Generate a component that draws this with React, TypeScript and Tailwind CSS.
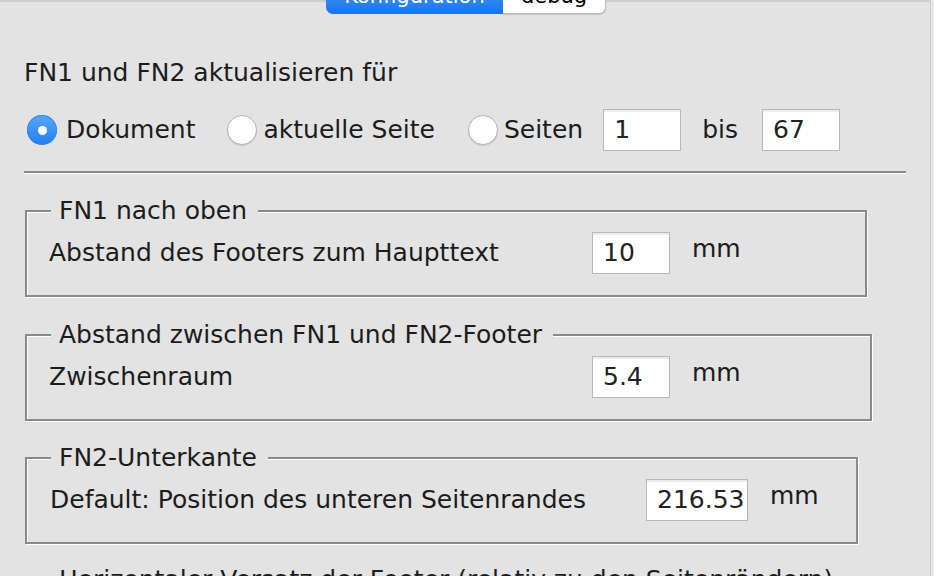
import { ReactNode } from "react"

const Radio = ({ checked }: { checked?: boolean }) =>
    checked ? (
        <span className="flex h-[30px] w-[30px] flex-none items-center justify-center rounded-full bg-gradient-to-b from-[#5aa6f8] to-[#1f7ef0] shadow-[inset_0_0_0_1px_#3a86e8]">
            <span className="h-[9px] w-[9px] rounded-full bg-white" />
        </span>
    ) : (
        <span className="block h-[30px] w-[30px] flex-none rounded-full border border-[#b3b3b3] bg-white shadow-[0_1px_1px_rgba(0,0,0,0.12)]" />
    )

const Field = ({ value, width }: { value: string; width: string }) => (
    <div
        className={`${width} flex h-[42px] flex-none items-center border border-[#b9b9b9] bg-white pl-[10px] text-[#222] shadow-[inset_0_2px_0_#ececec]`}>
        {value}
    </div>
)

const Group = ({ title, width, children }: { title: string; width: string; children: ReactNode }) => (
    <fieldset
        className={`${width} ml-[25px] border-2 border-[#8a8a8a] px-0 pb-[21px] pt-[6px] shadow-[inset_1px_1px_0_#ffffff,1px_1px_0_#ffffff]`}>
        <legend className="ml-[24px] bg-[#e3e3e3] pl-[8px] pr-[11px] leading-[30px]">{title}</legend>
        {children}
    </fieldset>
)

export default function App() {
    return (
        <div className="h-[576px] w-[934px] overflow-hidden bg-[#e9e9e9] font-['DejaVu_Sans',sans-serif] text-[25px] text-[#1c1c1c]">
            <div className="h-full w-[931px] border-r border-t-2 border-[#cdcdcd] bg-[#e3e3e3]">
                {/* segmented control, mostly cut off above */}
                <div className="flex h-[12px] pl-[326px]">
                    <div className="-mt-[22px] flex h-[34px] w-[177px] items-center justify-center rounded-bl-[7px] bg-gradient-to-b from-[#4da1fb] to-[#1773ef] text-[21px] text-white">
                        Konfiguration
                    </div>
                    <div className="-mt-[22px] flex h-[34px] w-[103px] items-center justify-center rounded-br-[7px] border border-l-0 border-[#bdbdbd] bg-white text-[21px] text-black shadow-[0_1px_1px_rgba(0,0,0,0.15)]">
                        debug
                    </div>
                </div>

                <div className="mt-[44px] pl-[24px] leading-[30px]">FN1 und FN2 aktualisieren für</div>

                <div className="mt-[21px] flex h-[42px] items-center pl-[27px]">
                    <Radio checked />
                    <span className="ml-[9px]">Dokument</span>
                    <span className="ml-[32px] flex">
                        <Radio />
                    </span>
                    <span className="ml-[6px]">aktuelle Seite</span>
                    <span className="ml-[33px] flex">
                        <Radio />
                    </span>
                    <span className="ml-[6px]">Seiten</span>
                    <span className="ml-[20px] flex">
                        <Field value="1" width="w-[78px]" />
                    </span>
                    <span className="ml-[21px]">bis</span>
                    <span className="ml-[24px] flex">
                        <Field value="67" width="w-[78px]" />
                    </span>
                </div>

                <div className="ml-[24px] mt-[20px] w-[882px]">
                    <div className="h-[2px] bg-[#8b8b8b]" />
                    <div className="h-[1px] bg-white" />
                </div>

                <div className="mt-[22px]">
                    <Group title="FN1 nach oben" width="w-[842px]">
                        <div className="flex h-[42px] items-center pl-[22px]">
                            <span className="w-[543px] flex-none">Abstand des Footers zum Haupttext</span>
                            <Field value="10" width="w-[78px]" />
                            <span className="-mt-[8px] ml-[22px]">mm</span>
                        </div>
                    </Group>
                </div>

                <div className="mt-[23px]">
                    <Group title="Abstand zwischen FN1 und FN2-Footer" width="w-[847px]">
                        <div className="flex h-[42px] items-center pl-[22px]">
                            <span className="w-[543px] flex-none">Zwischenraum</span>
                            <Field value="5.4" width="w-[78px]" />
                            <span className="-mt-[8px] ml-[22px]">mm</span>
                        </div>
                    </Group>
                </div>

                <div className="mt-[22px]">
                    <Group title="FN2-Unterkante" width="w-[833px]">
                        <div className="flex h-[42px] items-center pl-[23px]">
                            <span className="w-[596px] flex-none">Default: Position des unteren Seitenrandes</span>
                            <Field value="216.53" width="w-[102px]" />
                            <span className="-mt-[8px] ml-[22px]">mm</span>
                        </div>
                    </Group>
                </div>

                <div className="mt-[21px]">
                    <Group title="Horizontaler Versatz der Footer (relativ zu den Seitenrändern)" width="w-[860px]">
                        <div className="h-[42px]" />
                    </Group>
                </div>
            </div>
        </div>
    )
}
